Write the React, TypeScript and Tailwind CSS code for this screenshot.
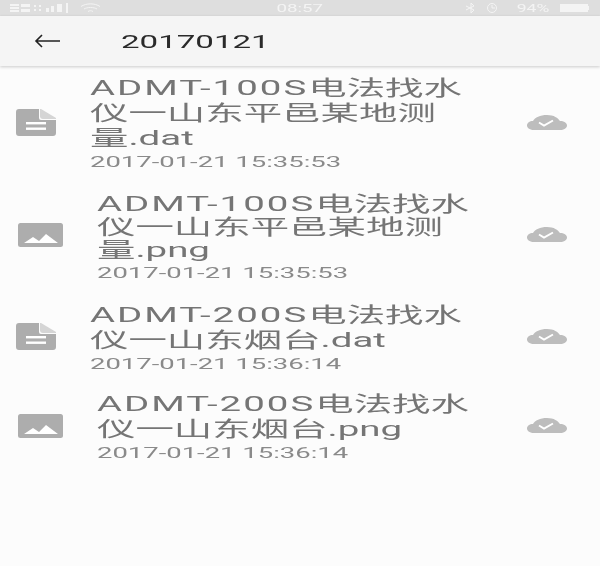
const FileIcon = () => (
  <svg width="40" height="27" viewBox="0 0 40 27" className="block">
    <path d="M3 0H23V9a2 2 0 0 0 2 2H40V24a3 3 0 0 1-3 3H3a3 3 0 0 1-3-3V3a3 3 0 0 1 3-3Z" fill="#adadad" />
    <path d="M24 0h1l15 9v1H27a3 3 0 0 1-3-3Z" fill="#adadad" opacity="0.5" />
    <rect x="10" y="13" width="20" height="2.4" fill="#fff" />
    <rect x="10" y="18.500" width="20" height="2.4" fill="#fff" />
  </svg>
);

const ImageIcon = () => (
  <svg width="45" height="24" viewBox="0 0 45 24" className="block">
    <rect width="45" height="24" rx="2.5" fill="#adadad" />
    <path d="M6 20 15 14l6 4 7-7 12 9Z" fill="#fff" />
  </svg>
);

const CloudIcon = () => (
  <svg width="40" height="15" viewBox="0 0 40 15" className="block">
    <path d="M7 15C2 15 0 12.500 0 10.500 0 8 2.500 6 6 6 8 2.500 13 0 20 0 27 0 31 3 33 6 37 6 40 8 40 10.500 40 13 37 15 33 15Z" fill="#bdbdbd" />
    <path d="M12 7.500l5 3 9-5" fill="none" stroke="#fff" strokeWidth="2" />
  </svg>
);

const Signals = () => (
  <svg width="92" height="10" viewBox="0 0 92 10" className="block" fill="#f4f4f4">
    <rect x="0" y="1" width="9" height="2" />
    <rect x="0" y="4" width="9" height="2" />
    <rect x="0" y="7" width="9" height="2" />
    <rect x="11" y="1" width="9" height="3" />
    <rect x="11" y="6" width="9" height="3" />
    <rect x="24" y="2" width="2" height="2" />
    <rect x="24" y="6" width="2" height="2" />
    <rect x="29" y="2" width="2" height="2" />
    <rect x="29" y="6" width="2" height="2" />
    <rect x="36" y="5" width="3" height="4" />
    <rect x="41" y="3" width="3" height="6" />
    <rect x="47" y="1" width="5" height="8" />
    <rect x="56" y="0" width="2" height="10" />
    <path d="M71 3.500c5-3.500 14-3.500 19 0M74 6c3-2 10-2 13 0M78 8.500c1.500-1 3.500-1 5 0" fill="none" stroke="#f4f4f4" strokeWidth="1" />
  </svg>
);

type Row = {
  icon: "file" | "image";
  model: string;
  first: string;
  rest: string[];
  date: string;
  pl: string;
  h: string;
  lead: string;
  pt: string;
};

const rows: Row[] = [
  { icon: "file", model: "ADMT-100S", first: "电法找水", rest: ["仪一山东平邑某地测", "量.dat"], date: "2017-01-21 15:35:53", pl: "pl-4", h: "h-[110px]", lead: "leading-[25px]", pt: "pt-[4px]" },
  { icon: "image", model: "ADMT-100S", first: "电法找水", rest: ["仪一山东平邑某地测", "量.png"], date: "2017-01-21 15:35:53", pl: "pl-[18px]", h: "h-[115px]", lead: "leading-[23px]", pt: "pt-[8px]" },
  { icon: "file", model: "ADMT-200S", first: "电法找水", rest: ["仪一山东烟台.dat"], date: "2017-01-21 15:36:14", pl: "pl-4", h: "h-[89px]", lead: "leading-[25px]", pt: "pt-1" },
  { icon: "image", model: "ADMT-200S", first: "电法找水", rest: ["仪一山东烟台.png"], date: "2017-01-21 15:36:14", pl: "pl-[18px]", h: "h-[89px]", lead: "leading-[25px]", pt: "pt-1" },
];

export default function App() {
  return (
    <div className="w-[600px] h-[566px] overflow-hidden bg-[#fcfcfc] font-['Roboto','Noto_Sans_CJK_SC',sans-serif] blur-[0.5px]">
      <div className="h-4 bg-[#dedede] grid grid-cols-3 items-center text-[11px] leading-none text-[#f4f4f4]">
        <div className="pl-[10px]"><Signals /></div>
        <div className="flex justify-center"><span className="scale-x-[1.7]">08:57</span></div>
        <div className="flex items-center justify-end gap-[9px] pr-[11px]">
          <svg width="40" height="10" viewBox="0 0 40 10" className="block" fill="none" stroke="#f4f4f4" strokeWidth="1">
            <path d="M0 3l8 4-3 3V0l3 3-8 4" />
            <circle cx="26" cy="5" r="4.500" />
            <path d="M26 2v3h3" />
          </svg>
          <span className="w-[36px] scale-x-[1.6] text-center">94%</span>
          <span className="flex items-center">
            <span className="block w-7 h-2 bg-[#f4f4f4]" />
            <span className="block w-px h-1 bg-[#f4f4f4]" />
          </span>
        </div>
      </div>
      <div className="h-[50px] bg-[#f5f5f5] shadow-[0_1px_3px_rgba(0,0,0,0.2)] flex items-center pl-[34px] relative">
        <svg width="26" height="14" viewBox="0 0 26 14" className="block">
          <path d="M8 1 2 7l6 6M2 7h24" fill="none" stroke="#222" strokeWidth="1.6" />
        </svg>
        <span className="ml-[61px] text-[19px] leading-none text-[#2a2a2a] origin-left scale-x-[1.74]">20170121</span>
      </div>
      <div className="pt-px">
        {rows.map((r, i) => (
          <div key={i} className={`flex items-center ${r.h} ${r.pl} pr-[33px]`}>
            <div className={r.icon === "file" ? "w-[74px] shrink-0" : "w-[79px] shrink-0"}>
              {r.icon === "file" ? <FileIcon /> : <ImageIcon />}
            </div>
            <div className={`flex-1 min-w-0 whitespace-nowrap ${r.pt}`}>
              <div className={`text-[21px] ${r.lead} text-[#757575] origin-left scale-x-[1.83]`}>
                <span className="tracking-[1.1px]">{r.model}</span>
                {r.first}
              </div>
              {r.rest.map((l) => (
                <div key={l} className={`text-[21px] ${r.lead} text-[#757575] origin-left scale-x-[1.83]`}>{l}</div>
              ))}
              <div className="text-[14px] leading-[22px] text-[#8a8a8a] origin-left scale-x-[1.96]">{r.date}</div>
            </div>
            <CloudIcon />
          </div>
        ))}
      </div>
    </div>
  );
}
